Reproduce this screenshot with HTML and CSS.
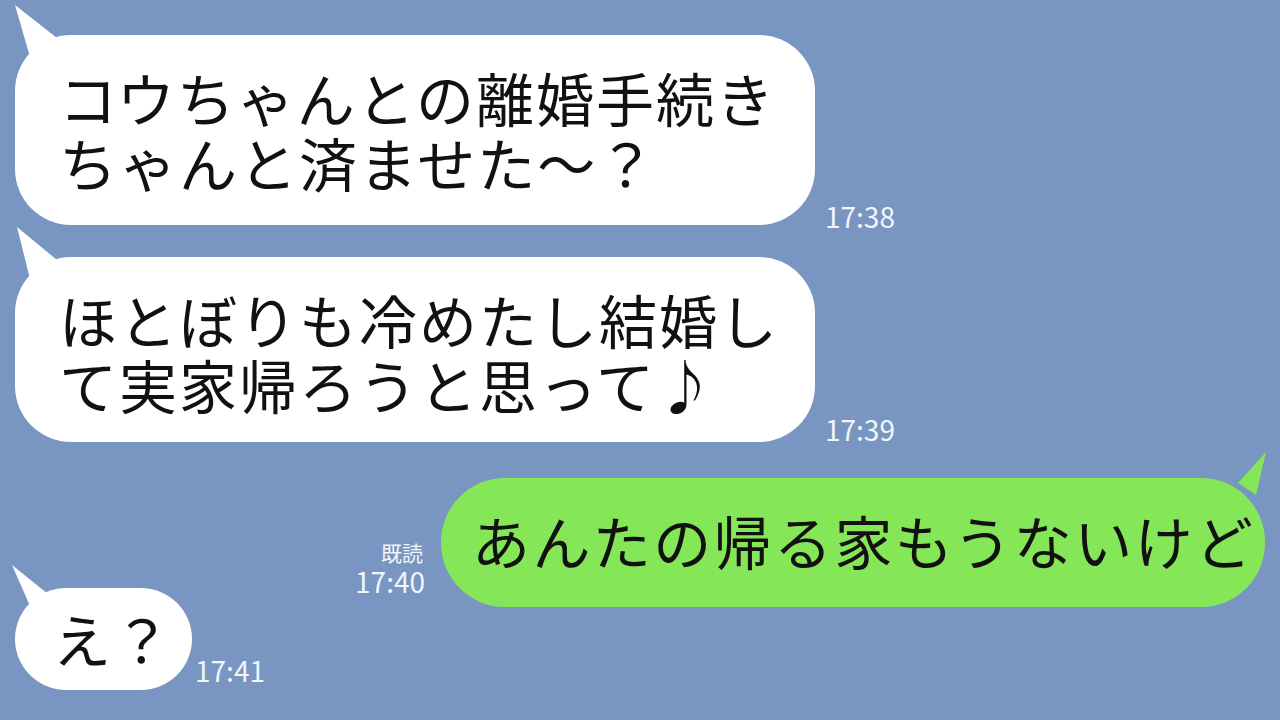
FILE: index.html
```html
<!DOCTYPE html>
<html lang="ja">
<head>
  <meta charset="UTF-8">
  <meta name="viewport" content="width=device-width, initial-scale=1.0">
  <title>トーク</title>
  <link rel="stylesheet" href="styles.css">
</head>
<body>
  <div class="chat">
    <div class="row row-left first">
      <div class="bubble bubble-white wide">
        <svg class="tail tail-left" width="60" height="60" viewBox="0 0 60 60"><polygon points="0,0 42,33 15,52" fill="#fff"/></svg>
        コウちゃんとの離婚手続き<br>ちゃんと済ませた～？
      </div>
      <span class="time t1">17:38</span>
    </div>

    <div class="row row-left second">
      <div class="bubble bubble-white wide">
        <svg class="tail tail-left" width="60" height="60" viewBox="0 0 60 60"><polygon points="2,0 42,33 15,52" fill="#fff"/></svg>
        ほとぼりも冷めたし結婚し<br>て実家帰ろうと思って♪
      </div>
      <span class="time t2">17:39</span>
    </div>

    <div class="row row-right">
      <div class="status">
        <span class="read">既読</span>
        <span class="time">17:40</span>
      </div>
      <div class="bubble bubble-green">
        <svg class="tail tail-right" width="60" height="60" viewBox="0 0 60 60"><polygon points="58,0 30,31 48,43" fill="#85e657"/></svg>
        あんたの帰る家もうないけど
      </div>
    </div>

    <div class="row row-left last">
      <div class="bubble bubble-white short">
        <svg class="tail tail-left small" width="60" height="60" viewBox="0 0 60 60"><polygon points="0,0 36,29 18,41" fill="#fff"/></svg>
        え？
      </div>
      <span class="time t4">17:41</span>
    </div>
  </div>
</body>
</html>
```

FILE: styles.css
```css
body {
  margin: 0;
  background-color: #7896c1;
  font-family: "Noto Sans CJK JP", "Noto Sans", sans-serif;
  color: #111;
}
.chat {
  padding: 35px 15px 0;
  display: flex;
  flex-direction: column;
  gap: 32px;
}
.row {
  display: flex;
  align-items: flex-end;
}
.row-right {
  justify-content: flex-end;
  margin-top: 4px;
}
.row.last {
  margin-top: -51px;
}
.bubble {
  position: relative;
  font-size: 58px;
  line-height: 65px;
  letter-spacing: 2px;
  white-space: nowrap;
}
.bubble-white {
  background: #fff;
  border-radius: 56px;
}
.bubble-white.wide {
  width: 800px;
  box-sizing: border-box;
  padding: 30px 20px 30px 44px;
}
.second .bubble-white.wide {
  padding-bottom: 25px;
}
.bubble-white.short {
  padding: 18px 19px 19px 38px;
  border-radius: 52px;
}
.bubble-green {
  background: #85e657;
  border-radius: 64px;
  padding: 30px 10px 34px 31px;
  width: 824px;
  box-sizing: border-box;
  letter-spacing: 2.4px;
}
.tail {
  position: absolute;
}
.tail-left {
  left: 0;
  top: -30px;
}
.tail-left.small {
  left: -3px;
  top: -23px;
}
.tail-right {
  right: -3px;
  top: -26px;
}
.time {
  color: #f2f5fa;
  font-size: 28px;
  line-height: 32px;
  letter-spacing: 0;
}
.row-left .time {
  margin-left: 10px;
}
.t1 {
  margin-bottom: -7px;
}
.t2 {
  margin-bottom: -3px;
}
.row-left .t4 {
  margin-left: 3px;
  margin-bottom: 4px;
}
.status {
  display: flex;
  flex-direction: column;
  align-items: flex-end;
  margin-right: 16px;
  margin-bottom: 10px;
}
.read {
  color: #f2f5fa;
  font-size: 21px;
  line-height: 26px;
  margin-right: 2px;
}
```
